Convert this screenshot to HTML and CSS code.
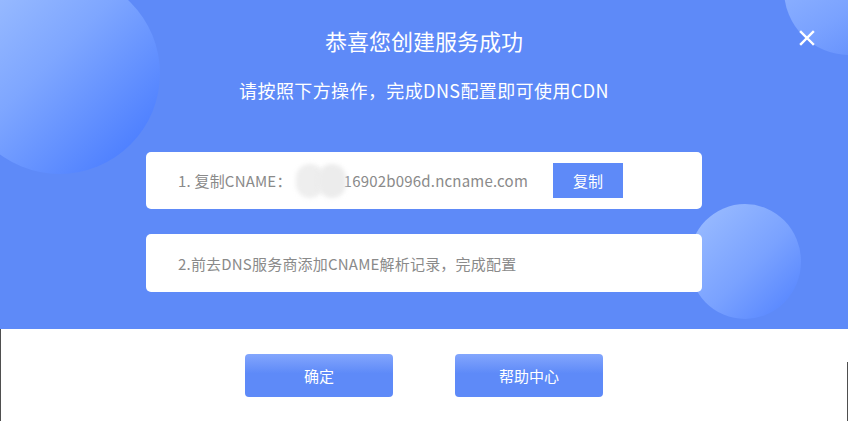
FILE: index.html
```html
<!DOCTYPE html>
<html lang="zh-CN">
<head>
  <meta charset="UTF-8">
  <title>创建服务成功</title>
  <link rel="stylesheet" href="styles.css">
</head>
<body>
  <div class="dialog">
    <div class="hero">
      <div class="bubble bubble-left"></div>
      <div class="bubble bubble-top"></div>
      <div class="bubble bubble-right"></div>

      <button class="close" aria-label="关闭">
        <svg width="16" height="16" viewBox="0 0 16 16">
          <path d="M2 2 L14 14 M14 2 L2 14" stroke="#fff" stroke-width="2.4" stroke-linecap="square"/>
        </svg>
      </button>

      <h2 class="title">恭喜您创建服务成功</h2>
      <p class="subtitle">请按照下方操作，完成DNS配置即可使用CDN</p>

      <div class="step step-copy">
        <span class="label">1. 复制CNAME：</span>
        <span class="masked"><i></i><i></i></span>
        <span class="cname">16902b096d.ncname.com</span>
        <button class="btn-copy">复制</button>
      </div>

      <div class="step">
        <span class="label">2.前去DNS服务商添加CNAME解析记录，完成配置</span>
      </div>
    </div>

    <div class="footer">
      <button class="btn">确定</button>
      <button class="btn">帮助中心</button>
    </div>
  </div>
</body>
</html>
```

FILE: styles.css
```css
body {
  margin: 0;
  font-family: "Noto Sans CJK SC", "Open Sans", sans-serif;
  background: #fff;
}
.dialog {
  position: relative;
  width: 848px;
  height: 421px;
  overflow: hidden;
}
/* window edges */
.dialog::before,
.dialog::after {
  content: "";
  position: absolute;
  bottom: 0;
  width: 1px;
  background: #4f4f4f;
}
.dialog::before {
  left: 0;
  top: 0;
}
.dialog::after {
  right: 0;
  top: 362px;
}
.hero {
  position: relative;
  height: 329px;
  background: #5e8af8;
  overflow: hidden;
  display: flex;
  flex-direction: column;
  align-items: center;
}
.bubble {
  position: absolute;
  border-radius: 50%;
  background: linear-gradient(135deg, #a4c4ff 0%, #7ea6ff 45%, #3f74ff 100%);
}
.bubble-left {
  left: -41px;
  top: -27px;
  width: 201px;
  height: 201px;
}
.bubble-top {
  left: 784px;
  top: -75px;
  width: 130px;
  height: 130px;
  background: linear-gradient(150deg, #9ebfff 0%, #7aa2ff 60%, #5a88fb 100%);
}
.bubble-right {
  left: 689px;
  top: 204px;
  width: 112px;
  height: 115px;
  background: linear-gradient(135deg, #9ebfff 0%, #7aa2ff 55%, #4f80ff 100%);
}
.close {
  position: absolute;
  right: 33px;
  top: 30px;
  padding: 0;
  border: 0;
  background: none;
  width: 16px;
  height: 16px;
  cursor: pointer;
}
.title,
.subtitle,
.step {
  position: relative;
}
.title {
  margin: 24px 0 0;
  font-size: 22px;
  font-weight: normal;
  line-height: 32px;
  color: #fff;
}
.subtitle {
  margin: 20px 0 0;
  font-size: 18px;
  line-height: 28px;
  letter-spacing: 0.4px;
  color: #fff;
}
.step {
  width: 556px;
  box-sizing: border-box;
  background: #fff;
  border-radius: 5px;
  display: flex;
  align-items: center;
  padding-left: 32px;
  font-size: 15px;
  color: #8a8a8a;
}
.step-copy {
  margin-top: 48px;
  height: 57px;
}
.step + .step {
  margin-top: 25px;
  height: 58px;
}
.label {
  letter-spacing: 0.2px;
}
.masked {
  display: inline-flex;
  width: 50px;
  height: 34px;
  margin: 0 -2px 0 4px;
}
.masked i {
  display: block;
  width: 28px;
  height: 34px;
  border-radius: 14px;
  background: #eeeeee;
  filter: blur(2px);
}
.masked i + i {
  margin-left: -6px;
  background: #ececec;
}
.cname {
  letter-spacing: 0.2px;
}
.btn-copy {
  margin-left: 25px;
  width: 70px;
  height: 35px;
  border: 0;
  background: #5e8af8;
  color: #fff;
  font-family: inherit;
  font-size: 15px;
  cursor: pointer;
}
.footer {
  display: flex;
  justify-content: center;
  gap: 62px;
  padding-top: 25px;
}
.btn {
  width: 148px;
  height: 43px;
  border: 0;
  border-radius: 4px;
  background: linear-gradient(180deg, #83a6fd 0%, #5e8af8 45%, #5e8af8 100%);
  color: #fff;
  font-family: inherit;
  font-size: 15px;
  cursor: pointer;
}
```
